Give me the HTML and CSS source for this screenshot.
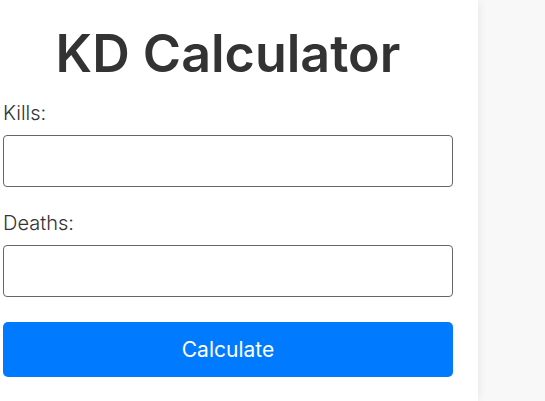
FILE: index.html
```html
<!DOCTYPE html>
<html lang="en">
<head>
<meta charset="utf-8">
<title>KD Calculator</title>
<link rel="stylesheet" href="styles.css">
</head>
<body>
<div class="page">
  <main class="card">
    <h1 class="title">KD Calculator</h1>
    <form class="form">
      <label class="label" for="kills">Kills:</label>
      <input class="field" id="kills" type="number">
      <label class="label" for="deaths">Deaths:</label>
      <input class="field" id="deaths" type="number">
      <button class="btn" type="button">Calculate</button>
    </form>
  </main>
</div>
</body>
</html>
```

FILE: styles.css
```css
html, body {
  margin: 0;
  padding: 0;
  height: 100%;
}
body {
  background: #f8f8f8;
  font-family: "Inter", "Open Sans", sans-serif;
  color: #333;
  overflow: hidden;
}
.page {
  display: flex;
  height: 100%;
}
.card {
  width: 450px;
  margin-left: -22px;
  padding: 0 25px;
  background: #fff;
  box-shadow: 0 0 10px rgba(0, 0, 0, 0.08);
  display: flex;
  flex-direction: column;
}
.title {
  margin: 24px 0 0;
  font-size: 52px;
  line-height: 60px;
  font-weight: 600;
  text-align: center;
  color: #333;
}
.form {
  display: flex;
  flex-direction: column;
  margin-top: 16px;
}
.label {
  font-size: 20px;
  line-height: 26px;
  font-weight: 300;
  color: #333;
  margin-bottom: 9px;
}
.field {
  height: 52px;
  box-sizing: border-box;
  border: 1px solid #666;
  border-radius: 4px;
  margin: 0 0 23px;
  padding: 0 10px;
  font: inherit;
}
.btn {
  margin-top: 2px;
  height: 55px;
  border: none;
  border-radius: 5px;
  background: #007bff;
  color: #fff;
  font-family: inherit;
  font-size: 21px;
  font-weight: 400;
}
```
